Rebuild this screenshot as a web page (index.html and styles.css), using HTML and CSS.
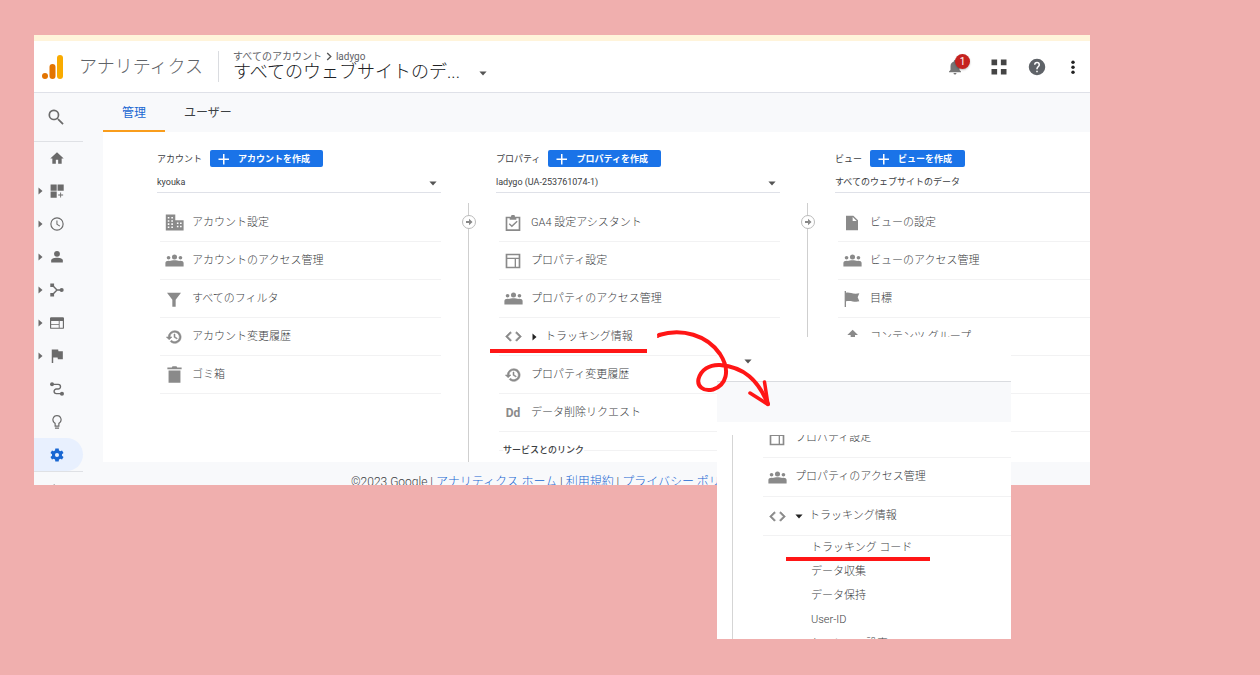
FILE: index.html
```html
<!DOCTYPE html>
<html lang="ja">
<head>
<meta charset="utf-8">
<title>アナリティクス</title>
<link rel="stylesheet" href="styles.css">
</head>
<body>
<svg class="defs" aria-hidden="true">
  <symbol id="caret" viewBox="0 0 10 6"><path d="M.5.5h9L5 5.500z"/></symbol>
  <symbol id="caret-right" viewBox="0 0 6 10"><path d="M.5.5v9L5.500 5z"/></symbol>
  <symbol id="people" viewBox="0 0 24 24"><circle cx="4.500" cy="8.500" r="2.300"/><circle cx="12" cy="7.500" r="3.200"/><circle cx="19.500" cy="8.500" r="2.300"/><path d="M.5 19.500V15c0-2 2.500-3 5.500-2.500 2.500-1.200 9.500-1.200 12 0 3-.5 5.500.5 5.500 2.500v4.500z"/></symbol>
  <symbol id="layout" viewBox="0 0 24 24"><path fill-rule="evenodd" d="M1 1h22v22H1zM3.500 3.500V7h17V3.500zM3.500 9v11.500h11V9zM16.500 9v11.500h4V9z"/></symbol>
  <symbol id="history" viewBox="0 0 24 24"><path stroke="currentColor" stroke-width=".8" d="M13 2.500a9.500 9.500 0 0 0-9.500 9.500H.5l4.200 4.200L9 12H6a7 7 0 1 1 2.060 4.940L6.440 18.700A9.500 9.500 0 1 0 13 2.500zm-1 5v5l4.280 2.540.72-1.210-3.500-2.080V7.500z"/></symbol>
  <symbol id="code" viewBox="0 0 24 24"><path stroke="currentColor" stroke-width=".8" d="M9.400 16.600 4.800 12l4.600-4.600L8 6l-6 6 6 6zm5.200 0 4.600-4.600-4.600-4.600L16 6l6 6-6 6z"/></symbol>
  <symbol id="plus" viewBox="0 0 12 12"><path d="M5 1h1.500v4.500H11V7H6.500v4.500H5V7H.5V5.500H5z"/></symbol>
  <symbol id="step" viewBox="0 0 16 16"><circle cx="8" cy="8" r="6.500" fill="#fff" stroke="#bbb"/><path fill="#888" d="M5 7h3V4.800L11.500 8 8 11.200V9H5z"/></symbol>
</svg>

<div class="stage">
  <div class="app">
    <header class="header">
      <svg class="logo" viewBox="0 0 22 24"><rect x="15" y="0" width="6" height="24" rx="3" fill="#f9ab00"/><rect x="7.500" y="9" width="6" height="15" rx="3" fill="#e37400"/><circle cx="3" cy="21" r="3" fill="#e37400"/></svg>
      <span class="brand">アナリティクス</span>
      <div class="account">
        <div class="crumb"><span>すべてのアカウント</span><svg viewBox="0 0 6 10"><path d="M1 1l4 4-4 4" fill="none" stroke="#555" stroke-width="1.500"/></svg><span>ladygo</span></div>
        <div class="view-name">すべてのウェブサイトのデ...</div>
      </div>
      <svg class="caret"><use href="#caret"/></svg>
      <div class="actions">
        <button class="icon-button" aria-label="通知">
          <svg viewBox="0 0 24 24"><path d="M12 22c1.100 0 2-.9 2-2h-4a2 2 0 0 0 2 2zm6-6v-5c0-3.070-1.640-5.640-4.500-6.320V4a1.500 1.500 0 0 0-3 0v.68C7.630 5.360 6 7.920 6 11v5l-2 2v1h16v-1z"/></svg>
          <span class="badge">1</span>
        </button>
        <button class="icon-button" aria-label="アプリ"><svg viewBox="0 0 24 24" class="apps"><path d="M2 2h7.500v7.500H2zM14.500 2H22v7.500h-7.500zM2 14.500h7.500V22H2zM14.500 14.500H22V22h-7.500z"/></svg></button>
        <button class="icon-button" aria-label="ヘルプ"><svg viewBox="0 0 24 24" class="help"><path d="M12 1a11 11 0 1 0 0 22 11 11 0 0 0 0-22zm1 18h-2v-2h2zm2.070-7.750-.9.920C13.450 12.900 13 13.500 13 15h-2v-.5c0-1.100.45-2.100 1.170-2.830l1.240-1.260A2 2 0 1 0 10 9H8a4 4 0 1 1 8 0c0 .88-.36 1.680-.93 2.250z"/></svg></button>
        <button class="icon-button" aria-label="メニュー"><svg viewBox="0 0 24 24" class="more"><circle cx="12" cy="5" r="2.600"/><circle cx="12" cy="12.500" r="2.600"/><circle cx="12" cy="20" r="2.600"/></svg></button>
      </div>
    </header>

    <div class="body">
      <nav class="sidebar">
        <a href="#" class="search" aria-label="検索"><svg viewBox="0 0 24 24"><path d="M15.500 14h-.79l-.28-.27A6.500 6.500 0 1 0 13.730 14.430l.27.28v.79l5.700 5.700 1.500-1.500zm-6 0a4.500 4.500 0 1 1 0-9 4.500 4.500 0 0 1 0 9z"/></svg></a>
        <div class="side-list">
          <a href="#" class="side" aria-label="ホーム"><svg viewBox="0 0 24 24"><path d="M10 22v-7h4v7h6v-9h3.500L12 2 .5 13H4v9z"/></svg></a>
          <a href="#" class="side" aria-label="カスタム"><svg class="tri"><use href="#caret-right"/></svg><svg viewBox="0 0 24 24"><path d="M1 1h10.500v10.500H1zM13 1h10.500v10.500H13zM1 13h10.500v10.500H1zM17.500 14.500H19V18h3.500v1.500H19V23h-1.500v-3.500H14V18h3.500z"/></svg></a>
          <a href="#" class="side" aria-label="リアルタイム"><svg class="tri"><use href="#caret-right"/></svg><svg viewBox="0 0 24 24"><path d="M12 .5a11.500 11.500 0 1 0 0 23 11.500 11.500 0 0 0 0-23zm0 21a9.500 9.500 0 1 1 0-19 9.500 9.500 0 0 1 0 19zM12.800 6H11v6.700l5.500 3.500.9-1.400-4.600-2.900z"/></svg></a>
          <a href="#" class="side" aria-label="ユーザー"><svg class="tri"><use href="#caret-right"/></svg><svg viewBox="0 0 24 24"><circle cx="12" cy="6.500" r="5"/><path d="M2 21.500V18C2 15 7 13.500 12 13.500S22 15 22 18v3.500z"/></svg></a>
          <a href="#" class="side" aria-label="集客"><svg class="tri"><use href="#caret-right"/></svg><svg viewBox="0 0 24 24"><path d="M4 4l8 8-8 8M12 12h8" fill="none" stroke="currentColor" stroke-width="2.400"/><path d="M.5 1H7v6H.5zM.5 17H7v6H.5z"/><circle cx="20" cy="12" r="3.500"/></svg></a>
          <a href="#" class="side" aria-label="行動"><svg class="tri"><use href="#caret-right"/></svg><svg viewBox="0 0 24 24"><path fill-rule="evenodd" d="M2 2h20a2 2 0 0 1 2 2v16a2 2 0 0 1-2 2H2a2 2 0 0 1-2-2V4A2 2 0 0 1 2 2zM2 8.500v5h13v-5zM2 15v5h13v-5zM16.500 8.500V20H22V8.500z"/></svg></a>
          <a href="#" class="side" aria-label="コンバージョン"><svg class="tri"><use href="#caret-right"/></svg><svg viewBox="0 0 24 24"><path d="M3 1h11l.5 3H22v13.500h-8.500l-.5-3H5.500V24H3z"/></svg></a>
          <a href="#" class="side" aria-label="アトリビューション"><svg viewBox="0 0 24 24"><path d="M4 4h10a4 4 0 0 1 0 8h-3a4 4 0 0 0 0 8h9" fill="none" stroke="currentColor" stroke-width="2.400"/><circle cx="3.500" cy="4" r="3.400"/><circle cx="20.500" cy="20" r="3.500"/></svg></a>
          <a href="#" class="side" aria-label="発見"><svg viewBox="0 0 24 24"><path d="M8.500 21.500h7v2h-7zM12 0a8 8 0 0 0-4.200 14.800V20h8.400v-5.200A8 8 0 0 0 12 0zm2.800 13.300-.6.500V18H9.800v-4.200l-.6-.5a6 6 0 1 1 5.600 0z"/></svg></a>
          <a href="#" class="side active" aria-label="管理"><svg viewBox="0 0 24 24"><path d="M20.500 13.200c.1-.8.100-1.600 0-2.400l2.700-2.100-2.600-4.500-3.200 1.300c-.6-.5-1.300-.9-2-1.200L14.900 1H9.100l-.5 3.300c-.7.300-1.400.7-2 1.200L3.400 4.200.8 8.700l2.700 2.100c-.1.8-.1 1.600 0 2.400L.8 15.300l2.600 4.500 3.200-1.300c.6.500 1.300.9 2 1.200l.5 3.300h5.800l.5-3.300c.7-.3 1.400-.7 2-1.200l3.200 1.300 2.600-4.500zM12 15.500a3.500 3.500 0 1 1 0-7 3.500 3.500 0 0 1 0 7z"/></svg></a>
          <a href="#" class="collapse" aria-label="折りたたむ"><svg viewBox="0 0 24 24"><path d="M15.400 3.400 14 2l-6 6 6 6 1.400-1.400L10.800 8z"/></svg></a>
        </div>
      </nav>

      <main class="main">
        <div class="tabs"><button class="tab selected">管理</button><button class="tab">ユーザー</button></div>
        <div class="columns">
          <section>
            <div class="column-head"><label for="account">アカウント</label><button class="create"><svg><use href="#plus"/></svg>アカウントを作成</button></div>
            <div class="picker"><select id="account"><option>kyouka</option></select><svg class="caret"><use href="#caret"/></svg></div>
            <ul class="items">
              <li><svg class="wide" viewBox="0 0 24 24"><path fill-rule="evenodd" d="M1 2h12v7h10.500v13H1zM3.500 5v2h2V5zm4.500 0v2h2V5zM3.500 9v2h2V9zM8 9v2h2V9zm-4.500 4v2h2v-2zM8 13v2h2v-2zm-4.500 4v2h2v-2zM8 17v2h2v-2zm7-5v2h2v-2zm4 0v2h2v-2zm-4 4v2h2v-2zm4 0v2h2v-2z"/></svg><a href="#">アカウント設定</a></li>
              <li><svg class="wide"><use href="#people"/></svg><a href="#">アカウントのアクセス管理</a></li>
              <li><svg viewBox="0 0 24 24"><path d="M1.500 2.500h21L14.500 13v10.500h-5V13z"/></svg><a href="#">すべてのフィルタ</a></li>
              <li><svg><use href="#history"/></svg><a href="#">アカウント変更履歴</a></li>
              <li><svg class="wide" viewBox="0 0 24 24"><path d="M4.500 7h15v15.500h-15zM3 3h5.500l1-1.500h5l1 1.500H21v2.500H3z"/></svg><a href="#">ゴミ箱</a></li>
            </ul>
          </section>
          <div class="connector"><svg><use href="#step"/></svg></div>
          <section>
            <div class="column-head"><label for="property">プロパティ</label><button class="create"><svg><use href="#plus"/></svg>プロパティを作成</button></div>
            <div class="picker"><select id="property"><option>ladygo (UA-253761074-1)</option></select><svg class="caret"><use href="#caret"/></svg></div>
            <ul class="items">
              <li><svg viewBox="0 0 24 24"><path fill-rule="evenodd" d="M1 2.500h8a3 3 0 0 1 6 0h8V24H1zM3.500 5v16.500h17V5H17v2H7V5zM7 12.500 5.700 14l4.600 4.500L19 10l-1.500-1.500-7.200 7z"/></svg><a href="#">GA4 設定アシスタント</a></li>
              <li><svg><use href="#layout"/></svg><a href="#">プロパティ設定</a></li>
              <li><svg class="wide"><use href="#people"/></svg><a href="#">プロパティのアクセス管理</a></li>
              <li><svg class="wide"><use href="#code"/></svg><a href="#"><svg class="tri dark"><use href="#caret-right"/></svg>トラッキング情報</a></li>
              <li><svg><use href="#history"/></svg><a href="#">プロパティ変更履歴</a></li>
              <li><span class="glyph">Dd</span><a href="#">データ削除リクエスト</a></li>
            </ul>
            <h2 class="group"><span>サービスとのリンク</span></h2>
          </section>
          <div class="connector"><svg><use href="#step"/></svg></div>
          <section>
            <div class="column-head"><label for="view">ビュー</label><button class="create"><svg><use href="#plus"/></svg>ビューを作成</button></div>
            <div class="picker"><select id="view"><option>すべてのウェブサイトのデータ</option></select></div>
            <ul class="items">
              <li><svg viewBox="0 0 24 24"><path fill-rule="evenodd" d="M3 1h11l7 7v15H3zM13 3v6h6z"/></svg><a href="#">ビューの設定</a></li>
              <li><svg class="wide"><use href="#people"/></svg><a href="#">ビューのアクセス管理</a></li>
              <li><svg viewBox="0 0 24 24"><path d="M1 0h2v2.500c6-1.500 9 3 20 1L20.500 9.500l2.500 6c-8 2-12-2-20 0V24H1z"/></svg><a href="#">目標</a></li>
              <li><svg viewBox="0 0 24 24"><path d="M13 1l8 8h-4.500v10H3l3-3.500h4V9H5z"/></svg><a href="#">コンテンツ グループ</a></li>
              <li></li>
              <li></li>
            </ul>
          </section>
        </div>
        <footer class="footer">©2023 Google | <a href="#">アナリティクス ホーム</a> | <a href="#">利用規約</a> | <a href="#">プライバシー ポリシー</a></footer>
      </main>
    </div>
  </div>

  <aside class="detail">
    <div class="detail-top"><svg class="caret"><use href="#caret"/></svg></div>
    <div class="detail-band"></div>
    <div class="detail-body">
      <ul class="items">
        <li><svg><use href="#layout"/></svg><a href="#">プロパティ設定</a></li>
        <li><svg class="wide"><use href="#people"/></svg><a href="#">プロパティのアクセス管理</a></li>
        <li><svg class="wide"><use href="#code"/></svg><a href="#"><svg class="caret dark"><use href="#caret"/></svg>トラッキング情報</a></li>
      </ul>
      <ul class="sub">
        <li><a href="#">トラッキング コード</a></li>
        <li><a href="#">データ収集</a></li>
        <li><a href="#">データ保持</a></li>
        <li><a href="#">User-ID</a></li>
        <li><a href="#">セッション設定</a></li>
      </ul>
    </div>
  </aside>

  <div class="mark mark-info"></div>
  <div class="mark mark-code"></div>
  <svg class="arrow" viewBox="650 320 130 100">
    <path d="M659 335C682 328 707 335 720 354C731 371 726 385 713 389.500C703 392 697 386 698.500 379C701 370 709 364.500 720 365C744 367 758 380 768 404" stroke-width="4"/>
    <path d="M658 337L664 333.500" stroke-width="2"/>
    <path d="M764.500 382L768 404.500L750 393" stroke-width="3.500"/>
  </svg>
</div>
</body>
</html>
```
FILE: styles.css
```css
* { box-sizing: border-box; }

body {
  display: flow-root;
  min-height: 100vh;
  margin: 0;
  background: #f0afae;
  color: #3c4043;
  font-family: Roboto, "Noto Sans CJK JP", sans-serif;
  font-size: 11px;
  line-height: 16px;
}

ul { margin: 0; padding: 0; list-style: none; }
a { color: inherit; text-decoration: none; }
button { border: 0; padding: 0; background: none; color: inherit; font: inherit; }
svg { fill: currentColor; flex: none; }
.defs { position: absolute; width: 0; height: 0; }

.stage {
  position: relative;
  margin: 35px 170px 36px 34px;
}

.app {
  display: flex;
  flex-direction: column;
  height: calc(100vh - 225px);
  overflow: hidden;
  border-top: 6px solid #fff4da;
  background: #f8f9fb;
}

.caret { width: 8px; height: 5px; color: #555; }
.dark { color: #222; }

/* Header */
.header {
  display: flex;
  flex: none;
  align-items: center;
  height: 52px;
  padding: 0 7px 0 8px;
  border-bottom: 1px solid #dfe1e8;
  background: #fff;
}
.logo { width: 22px; height: 24px; }
.brand { margin-left: 15px; color: #5f6368; font-size: 18px; font-weight: 300; line-height: 26px; }
.account { margin-left: 15px; padding-left: 14px; border-left: 1px solid #dadce0; }
.crumb { display: flex; align-items: center; gap: 4px; height: 11px; color: #5f6368; font-size: 10px; }
.crumb svg { width: 6px; height: 9px; }
.view-name { height: 20px; color: #202124; font-size: 18px; font-weight: 300; line-height: 20px; }
.header > .caret { margin: 13px 0 0 19px; }
.actions { display: flex; gap: 18px; margin-left: auto; }
.icon-button { position: relative; display: grid; width: 20px; height: 20px; place-items: center; color: #757575; }
.icon-button svg { width: 18px; height: 18px; }
.icon-button:first-child { margin-right: 6px; }
.icon-button:last-child { margin-left: -2px; }
.icon-button .apps { color: #444; }
.icon-button .help { color: #5f6368; }
.icon-button .more { width: 16px; height: 16px; color: #222; }
.badge {
  position: absolute;
  top: -3px;
  left: 10px;
  width: 15px;
  height: 15px;
  border-radius: 50%;
  background: #c5221f;
  color: #fff;
  font-size: 10px;
  line-height: 15px;
  text-align: center;
  box-shadow: 0 1px 2px #0004;
}

/* Sidebar */
.body { display: flex; flex: 1; min-height: 0; }
.sidebar { flex: none; width: 49px; margin-right: 20px; color: #6b6b6b; }
.search { display: flex; height: 49px; padding: 0 0 0 12px; align-items: center; border-bottom: 1px solid #dfe1e5; }
.search svg { width: 20px; height: 20px; }
.side-list { margin-top: -1px; }
.side { display: flex; height: 33px; padding: 0 19px 0 5px; align-items: center; justify-content: flex-end; gap: 7px; }
.side svg { width: 14px; height: 14px; }
.side .tri, .tri { width: 5px; height: 8px; }
.active { border-radius: 0 17px 17px 0; background: #e8f0fe; color: #1967d2; }
.collapse { display: block; padding: 11px 12px; border-top: 1px solid #dfe1e5; }
.collapse svg { display: block; width: 14px; height: 14px; }

/* Admin columns */
.main { flex: 1; min-width: 0; }
.tabs { display: flex; height: 39px; font-size: 12px; }
.tab { padding: 2px 19px 0; border-bottom: 2px solid transparent; }
.selected { border-color: #f99d1c; color: #1967d2; }

.columns {
  display: grid;
  grid-template-columns: 284fr 55fr 284fr 55fr 255fr;
  height: 330px;
  padding: 18px 0 0 54px;
  overflow: hidden;
  background: #fff;
}
.column-head { display: flex; align-items: center; gap: 8px; height: 17px; font-size: 9px; }
.create {
  display: flex;
  align-items: center;
  gap: 8px;
  height: 17px;
  padding: 0 13px 0 8px;
  border-radius: 2px;
  background: #1a73e8;
  color: #fff;
  font-weight: 700;
}
.create svg { width: 12px; height: 12px; }
.picker { display: flex; align-items: center; height: 26px; padding-right: 4px; border-bottom: 1px solid #dfe1e8; }
.picker select {
  flex: 1;
  min-width: 0;
  padding: 5px 0 0;
  border: 0;
  appearance: none;
  background: none;
  color: #3c4043;
  font: inherit;
  font-size: 9px;
}
.picker .caret { margin-top: 7px; }

.items li {
  display: grid;
  grid-template-columns: 24px 1fr;
  align-items: center;
  justify-items: center;
  gap: 6px;
  height: 38px;
  margin-left: 3px;
  padding-left: 2px;
  border-bottom: 1px solid #f2f2f3;
}
.columns .items { margin-top: 11px; }
.items li > svg { width: 16px; height: 16px; color: #8a8a8a; }
.items li > .wide { width: 19px; height: 19px; }
.items a { display: flex; align-items: center; gap: 8px; justify-self: start; font-weight: 300; }
.items a .tri { margin-left: 1px; }
.glyph { color: #8a8a8a; font-size: 12px; font-weight: 700; }
.group { display: flex; align-items: center; margin: 10px 0 0 3px; font-size: 9px; font-weight: 500; line-height: 16px; }
.group::before, .group::after { content: ""; width: 4px; height: 1px; background: #f2f2f3; }
.group::after { flex: 1; }

.connector {
  justify-self: center;
  width: 16px;
  margin-top: 53px;
  padding-top: 11px;
  background: linear-gradient(#cfcfcf, #cfcfcf) center / 1px 100% no-repeat;
}
.connector svg { display: block; width: 16px; height: 16px; }

.footer { padding: 12px 0 0 248px; font-size: 12px; font-weight: 300; white-space: nowrap; }
.footer a { color: #1967d2; }

/* Expanded property panel */
.detail {
  position: absolute;
  top: 302px;
  left: 683px;
  width: 294px;
  height: 302px;
  overflow: hidden;
  background: #fff;
}
.detail-top { height: 45px; padding: 16px 0 0 27px; border-bottom: 1px solid #dadce0; }
.detail-band { height: 40px; background: #f8f9fb; }
.detail-body { height: 204px; margin: 13px 0 0 15px; padding-left: 27px; overflow: hidden; border-left: 1px solid #d5d5d5; }
.detail-body .items { margin-top: -16px; }
.detail-body .items li { height: 39px; }
.detail-body .items a { gap: 6px; }
.sub { padding-left: 51px; font-weight: 300; }
.sub li { height: 24px; line-height: 24px; }
.detail-top .caret { display: block; margin-top: 6px; }

/* Annotations */
.mark { position: absolute; height: 4px; background: #ff1616; }
.mark-info { top: 314px; left: 456px; width: 157px; }
.mark-code { top: 522px; left: 752px; width: 144px; }
.arrow {
  position: absolute;
  top: 285px;
  left: 616px;
  width: 130px;
  height: 100px;
  fill: none;
  stroke: #ff1616;
  stroke-linecap: round;
  stroke-linejoin: round;
}
```
